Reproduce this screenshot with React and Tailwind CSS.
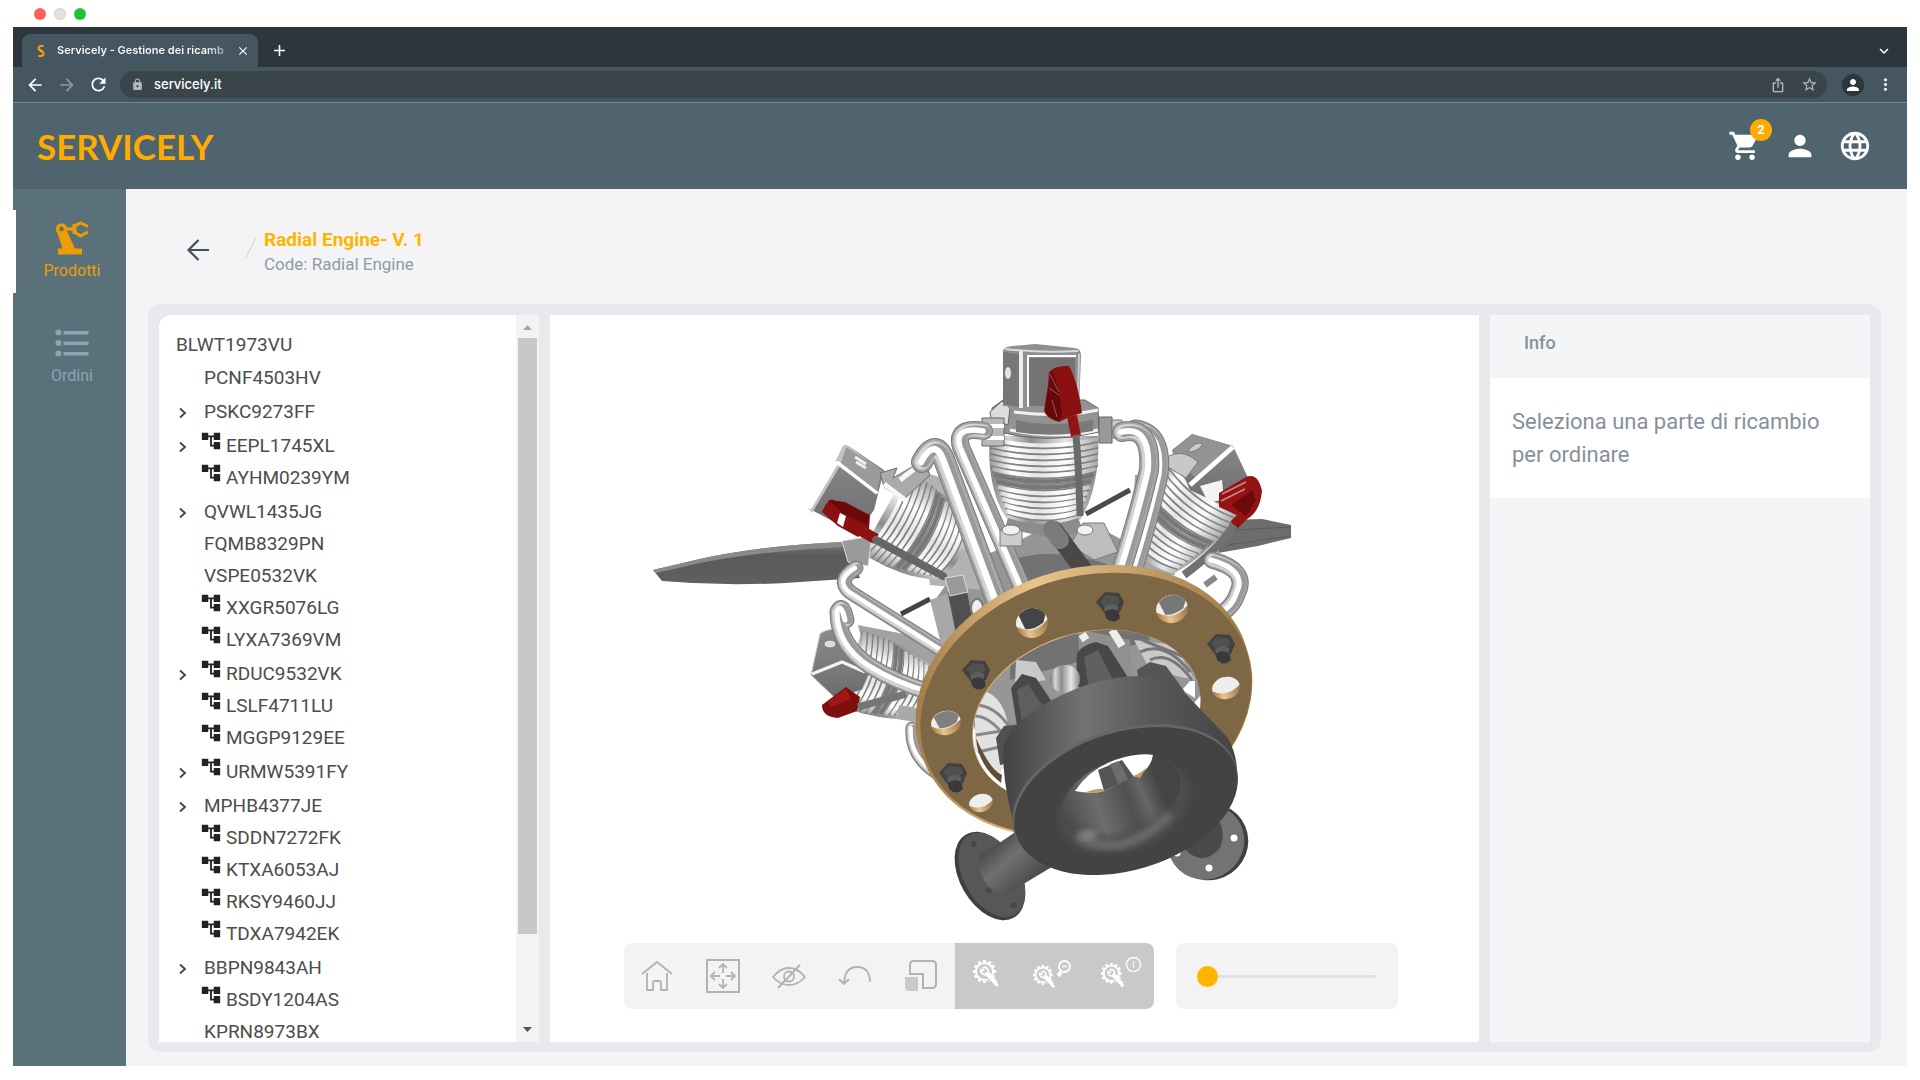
import React, { useState } from "react";
import {
  MdShoppingCart,
  MdPerson,
  MdLanguage,
  MdAccountTree,
  MdIosShare,
  MdStarBorder,
  MdMoreVert,
  MdLock,
  MdRefresh,
  MdClose,
  MdAdd,
  MdArrowBack,
  MdArrowForward,
  MdKeyboardArrowDown,
} from "react-icons/md";

const parts = [
  { name: "PCNF4503HV" },
  { name: "PSKC9273FF", open: true },
  { name: "EEPL1745XL", open: true, group: true },
  { name: "AYHM0239YM", group: true },
  { name: "QVWL1435JG", open: true },
  { name: "FQMB8329PN" },
  { name: "VSPE0532VK" },
  { name: "XXGR5076LG", group: true },
  { name: "LYXA7369VM", group: true },
  { name: "RDUC9532VK", open: true, group: true },
  { name: "LSLF4711LU", group: true },
  { name: "MGGP9129EE", group: true },
  { name: "URMW5391FY", open: true, group: true },
  { name: "MPHB4377JE", open: true },
  { name: "SDDN7272FK", group: true },
  { name: "KTXA6053AJ", group: true },
  { name: "RKSY9460JJ", group: true },
  { name: "TDXA7942EK", group: true },
  { name: "BBPN9843AH", open: true },
  { name: "BSDY1204AS", group: true },
  { name: "KPRN8973BX" },
];

function BrowserChrome() {
  return (
    <div className="shrink-0 font-[Inter,sans-serif] text-white">
      <div className="flex h-10 items-end bg-[#2c363c] pl-[9px] pr-[14px]">
        <div className="flex h-[33px] w-[236px] items-center rounded-t-lg bg-[#455660] pl-[12px] pr-[8px]">
          <svg viewBox="0 0 14 14" className="mr-[9px] size-[14px] shrink-0" fill="none" stroke="#f0a010" strokeWidth="2">
            <path d="M9.5 2H7.3Q4.6 2 4.6 4.4 4.6 5.6 6 6.4L8.4 8.2M4.4 12H6.8Q9.6 12 9.6 9.6 9.6 8.4 8.4 7.6L6 5.6" />
          </svg>
          <span className="min-w-0 flex-1 whitespace-nowrap bg-linear-to-r from-white from-85% to-[#6f7d85] bg-clip-text text-[11px] font-semibold text-transparent">
            Servicely - Gestione dei ricamb
          </span>
          <button aria-label="Chiudi scheda" className="ml-1">
            <MdClose className="size-[14px]" />
          </button>
        </div>
        <button aria-label="Nuova scheda" className="mb-[7px] ml-[12px]">
          <MdAdd className="size-[19px]" />
        </button>
        <button aria-label="Cerca schede" className="mb-[7px] ml-auto">
          <MdKeyboardArrowDown className="size-[18px]" />
        </button>
      </div>
      <div className="flex h-9 items-center border-b border-[#74858e] bg-[#455660] pl-[12px] pr-[12px]">
        <button aria-label="Indietro"><MdArrowBack className="size-5" /></button>
        <button aria-label="Avanti" className="ml-[12px] text-[#8d999f]"><MdArrowForward className="size-5" /></button>
        <button aria-label="Ricarica" className="ml-[11px]"><MdRefresh className="size-[21px]" /></button>
        <div className="ml-[11px] flex h-[27px] flex-1 items-center rounded-full bg-[#39454a] pl-[11px] pr-[9px]">
          <MdLock className="size-[13px] text-[#b4bbbe]" />
          <input
            aria-label="Indirizzo"
            defaultValue="servicely.it"
            className="ml-[10px] min-w-0 flex-1 bg-transparent text-[13px] font-medium outline-none"
          />
          <button aria-label="Condividi" className="text-[#b4bbbe]"><MdIosShare className="size-4" /></button>
          <button aria-label="Preferiti" className="ml-[15px] text-[#b4bbbe]"><MdStarBorder className="size-[17px]" /></button>
        </div>
        <button aria-label="Profilo" className="ml-[15px] flex size-[22px] items-center justify-center rounded-full bg-[#2c363c]">
          <MdPerson className="size-[18px]" />
        </button>
        <button aria-label="Menu" className="ml-[12px]"><MdMoreVert className="size-[19px]" /></button>
      </div>
    </div>
  );
}

function Header() {
  return (
    <header className="flex h-[86px] shrink-0 items-center bg-[#4f646f] pl-[24px] pr-[35px]">
      <a href="#home" className="font-[Lato,sans-serif] text-[35px] leading-none font-bold text-[#ffab00]">SERVICELY</a>
      <div className="ml-auto flex items-center gap-[21px] text-white">
        <button aria-label="Carrello" className="relative">
          <MdShoppingCart className="size-[34px]" />
          <span className="absolute -top-[10px] left-[22px] flex size-[22px] items-center justify-center rounded-full bg-[#ffab00] font-[Roboto,sans-serif] text-[13px] font-bold">
            2
          </span>
        </button>
        <button aria-label="Utente"><MdPerson className="size-[34px]" /></button>
        <button aria-label="Lingua"><MdLanguage className="size-[34px]" /></button>
      </div>
    </header>
  );
}

function RobotIcon() {
  return (
    <svg viewBox="0 0 34 34" className="h-[34px] w-[34px]" fill="none" stroke="currentColor">
      <path d="M3 33.500V27.500H7.500L2 10.500 10.500 7 20 27.500H27V33.500Z" fill="currentColor" stroke="none" />
      <circle cx="6.500" cy="8" r="4" strokeWidth="3.500" fill="#5a717c" />
      <path d="M10 8H19" strokeWidth="3.500" />
      <path d="M33 5.500 25.500 2 19.500 5V11L25.500 15 33 11" strokeWidth="3" />
      <path d="M19.500 3V13" strokeWidth="4" />
    </svg>
  );
}

function ListIcon() {
  return (
    <svg viewBox="0 0 34 34" className="h-[34px] w-[34px]" fill="currentColor">
      {[6.5, 17, 27.500].map((y) => (
        <g key={y}>
          <circle cx="3.500" cy={y} r="3" />
          <rect x="8.500" y={y - 1.500} width="25" height="3.500" />
        </g>
      ))}
    </svg>
  );
}

function Sidebar() {
  return (
    <nav className="flex w-[113px] shrink-0 flex-col gap-[22px] bg-[#5a717c] pt-[21px] font-[Roboto,sans-serif] text-[16px] leading-5">
      <a href="#prodotti" className="flex h-[83px] flex-col items-center gap-[6px] border-l-[3px] border-white pt-[11px] pl-[2px] text-[#ee9d00]">
        <RobotIcon />
        Prodotti
      </a>
      <a href="#ordini" className="flex h-[83px] flex-col items-center gap-[6px] border-l-[3px] border-transparent pt-[11px] pl-[2px] text-[#8ea4b1]">
        <ListIcon />
        Ordini
      </a>
    </nav>
  );
}

function PartsTree() {
  return (
    <section className="flex w-[380px] shrink-0 overflow-hidden rounded-tl-xl bg-white">
      <div className="min-w-0 flex-1 overflow-hidden pt-[14px] pl-[17px] font-[Roboto,sans-serif] text-[19px] leading-8 text-[#4c4c4c]">
        <p className="h-[33px]">BLWT1973VU</p>
        <ul>
          {parts.map((p) => (
            <li key={p.name} className={p.open ? "flex h-[34px] items-center pt-[2px]" : "flex h-8 items-center"}>
              <span className="w-[28px] shrink-0">
                {p.open && (
                  <button aria-label={"Espandi " + p.name} className="block pt-px pl-px">
                    <svg viewBox="0 0 12 12" className="size-3" fill="none" stroke="currentColor" strokeWidth="2">
                      <path d="M3 1.500 8 6 3 10.500" />
                    </svg>
                  </button>
                )}
              </span>
              {p.group && <MdAccountTree className="mr-1 -ml-1 mb-[10px] size-[22px] text-[#222]" />}
              <span>{p.name}</span>
            </li>
          ))}
        </ul>
      </div>
      <div className="flex w-[23px] shrink-0 flex-col items-center bg-[#f3f3f3]">
        <svg viewBox="0 0 23 23" className="size-[23px] shrink-0"><path d="M7 15 11.500 10 16 15Z" fill="#a8a8a8" /></svg>
        <div className="flex w-[19px] flex-1 flex-col"><div className="h-7/8 bg-[#c8c8c8]" /></div>
        <svg viewBox="0 0 23 23" className="size-[23px] shrink-0"><path d="M7 8 11.500 13 16 8Z" fill="#555" /></svg>
      </div>
    </section>
  );
}

function Pipe({ d, w }) {
  return (
    <g fill="none" strokeLinecap="round">
      <path d={d} stroke="#787878" strokeWidth={w} />
      <path d={d} stroke="#a3a3a3" strokeWidth={w - 2} />
      <path d={d} stroke="#d4d4d4" strokeWidth={w * 0.7} />
      <path d={d} stroke="#9a9a9a" strokeWidth={w * 0.5} transform="translate(2 0)" />
      <path d={d} stroke="#ffffff" strokeWidth={w * 0.3} transform="translate(-1 0)" />
    </g>
  );
}

/* A finned barrel along the vertical axis, centred on x = 0, starting at y = 0. */
function Barrel() {
  const rows = Array.from({ length: 13 }, (_, i) => i);
  return (
    <g>
      <path d="M-54 0H54C56 34 48 66 36 84 12 92-14 92-36 84-50 66-57 34-54 0Z" fill="url(#steel)" />
      {rows.map((i) => {
        const half = 54 - Math.max(0, i - 4) * 2.1;
        const y = 3 + i * 6;
        return (
          <g key={i} fill="none">
            <path d={`M${-half} ${y}Q0 ${y + 13} ${half} ${y}`} stroke={i === 6 || i === 7 ? "#777" : "url(#fin)"} strokeWidth="4" />
            <path d={`M${-half} ${y + 3}Q0 ${y + 16} ${half} ${y + 3}`} stroke="#808080" strokeWidth="1.300" />
          </g>
        );
      })}
    </g>
  );
}

function Nut({ x, y }) {
  return (
    <g transform={`translate(${x} ${y})`}>
      <path d="M-14-4-5-14 9-13 14-4 10 6-4 9Z" fill="#414141" />
      <path d="M-10-5-4-11 7-10 10-4 4 2-5 2Z" fill="#505050" />
      <path d="M-6 2 7 0 10 12Q3 19-4 12Z" fill="#393939" />
      <path d="M-6 2Q0-5 8 0L8 5Q1 1-5 6Z" fill="#5e5e5e" />
    </g>
  );
}

function Hole({ x, y, rx, ry, dark }) {
  return (
    <g transform={`translate(${x} ${y}) rotate(-14)`}>
      <ellipse rx={rx} ry={ry} fill="url(#goldEdge)" />
      <path d={`M${-rx} 0A${rx} ${ry} 0 0 1 ${rx} 0Q0 ${ry * 0.9} ${-rx} 0Z`} fill="#eee" />
      {dark && (
        <path
          d={`M${-rx * 0.7} ${-ry * 0.7}A${rx} ${ry} 0 0 1 ${rx * 0.94} ${-ry * 0.34}L${rx * 0.7} ${ry * 0.15}Q0 ${ry * 0.5} ${-rx * 0.5} ${ry * 0.28}Z`}
          fill={dark}
        />
      )}
    </g>
  );
}

function Engine() {
  return (
    <svg viewBox="550 315 929 628" className="min-h-0 w-full flex-1" role="img" aria-label="Radial Engine">
      <defs>
        <linearGradient id="steel" x1="0" x2="1">
          <stop offset="0" stopColor="#777" />
          <stop offset=".18" stopColor="#d6d6d6" />
          <stop offset=".38" stopColor="#8c8c8c" />
          <stop offset=".7" stopColor="#e6e6e6" />
          <stop offset="1" stopColor="#888" />
        </linearGradient>
        <linearGradient id="fin" gradientUnits="userSpaceOnUse" x1="-54" x2="54" y1="0" y2="0">
          <stop offset="0" stopColor="#9a9a9a" />
          <stop offset=".2" stopColor="#fff" />
          <stop offset=".45" stopColor="#e4e4e4" />
          <stop offset=".7" stopColor="#fff" />
          <stop offset="1" stopColor="#a8a8a8" />
        </linearGradient>
        <linearGradient id="face" x1="0" x2="0" y1="0" y2="1">
          <stop offset="0" stopColor="#8c8c8c" />
          <stop offset="1" stopColor="#6c6c6c" />
        </linearGradient>
        <linearGradient id="goldEdge" x1="0" x2="1">
          <stop offset="0" stopColor="#a37d48" />
          <stop offset=".35" stopColor="#e9c48c" />
          <stop offset="1" stopColor="#9c7743" />
        </linearGradient>
        <linearGradient id="bell" x1="0" x2="1">
          <stop offset="0" stopColor="#434343" />
          <stop offset=".35" stopColor="#737373" />
          <stop offset=".65" stopColor="#575757" />
          <stop offset="1" stopColor="#444" />
        </linearGradient>
        <linearGradient id="bore" x1="0" x2="1">
          <stop offset="0" stopColor="#4a4a4a" />
          <stop offset=".3" stopColor="#6d6d6d" />
          <stop offset=".55" stopColor="#505050" />
          <stop offset=".68" stopColor="#666" />
          <stop offset=".82" stopColor="#444" />
          <stop offset="1" stopColor="#444" />
        </linearGradient>
        <linearGradient id="blade" x1="0" x2="0" y1="0" y2="1">
          <stop offset="0" stopColor="#7c7c7c" />
          <stop offset=".3" stopColor="#5a5a5a" />
          <stop offset="1" stopColor="#606060" />
        </linearGradient>
        <linearGradient id="exhaust" x1="0" y1="0" x2="1" y2="1">
          <stop offset=".2" stopColor="#444" />
          <stop offset=".45" stopColor="#707070" />
          <stop offset=".8" stopColor="#444" />
        </linearGradient>
        <filter id="soft" x="-20%" y="-20%" width="140%" height="140%">
          <feGaussianBlur stdDeviation="3.500" />
        </filter>
      </defs>

      {/* propeller blades */}
      <path d="M653 570 700 559Q765 545 845 542L860 578 800 582Q730 587 662 581Z" fill="url(#blade)" />
      <path d="M653 570 700 559Q765 545 845 542V547Q760 551 700 563L656 573Z" fill="#8a8a8a" />
      <path d="M1225 520 1262 519 1291 525V538L1258 546 1218 553Z" fill="#6d6d6d" />
      <path d="M1235 530 1291 527M1228 545 1290 536" stroke="#5c5c5c" fill="none" />

      {/* crankcase behind the ring */}
      <path d="M935 600 960 565 1010 545 1040 530 1100 528 1160 560 1190 600 1205 690 1180 720 1000 730 985 760 965 700Z" fill="#969696" />
      <path d="M1012 560Q1055 545 1112 566L1150 640 1085 660 1010 680Z" fill="#727272" />
      <path d="M975 690Q1010 690 1010 750L1000 775 975 750Z" fill="#e2e2e2" />
      <path d="M975 705Q995 705 1010 728M975 716Q990 716 1008 740M976 735 1008 730M978 752 1008 745" stroke="#888" strokeWidth="3" fill="none" />

      {/* lower left cylinder */}
      <path d="M858 625 935 640 940 710 880 712Z" fill="#a2a2a2" />
      <g transform="translate(850 668) rotate(-72)"><g transform="scale(.72 .95)"><Barrel /></g></g>
      <path d="M820 634Q822 631 833 629L845 650 872 668 862 690 835 698 811 675Z" fill="url(#face)" stroke="#c9c9c9" />
      <path d="M812 674 842 662 865 672" stroke="#f4f4f4" strokeWidth="3" fill="none" />
      <ellipse cx="830" cy="644" rx="6" ry="4" fill="#ddd" stroke="#777" />
      <path d="M822 705 846 687 860 697 857 711 838 718Q822 717 822 705Z" fill="#7d0f0f" />
      <path d="M827 702 846 689 851 699 832 707Z" fill="#a31616" />
      <path d="M858 707 906 694" stroke="#757575" strokeWidth="7" fill="none" />
      <path d="M898 712 922 716" stroke="#a9a9a9" strokeWidth="14" />
      <Pipe d="M912 728Q910 755 935 772" w={13} />

      {/* upper left cylinder */}
      <path d="M915 470 950 480 985 590 930 585Z" fill="#b2b2b2" />
      <g transform="translate(884 512) rotate(-61)"><g transform="scale(.86 .98)"><Barrel /></g></g>
      <path d="M843 446Q846 444 850 447L884 470 874 510 857 534 808 508 835 463Z" fill="url(#face)" />
      <path d="M843 446 835 463 808 508 812 513 840 466 876 493 881 470 848 446Z" fill="#c4c4c4" />
      <path d="M836 463 810 507M838 463 876 492" stroke="#fff" strokeWidth="4" fill="none" strokeLinecap="round" />
      <path d="M846 447 882 470 877 491 841 463Z" fill="#9a9a9a" />
      <path d="M855 457 866 464M856 462 866 468" stroke="#eee" strokeWidth="3" />
      <path d="M880 473 897 468 893 478 924 460 930 475 903 500 884 487Z" fill="#aaa" stroke="#6c6c6c" />
      <path d="M884 484 905 500M900 480 918 466" stroke="#f7f7f7" strokeWidth="5" />
      <path d="M842 541 872 536 868 566 848 562Z" fill="#9b9b9b" stroke="#ddd" />
      <path d="M822 512Q828 497 834 500L870 515 869 529 858 537 838 526Z" fill="#8d1010" />
      <path d="M828 500 845 502 869 515 868 525 845 515Z" fill="#6b0909" />
      <path d="M840 513 846 516 843 527 837 523Z" fill="#fff" />
      <path d="M858 529 876 539" stroke="#8f1212" strokeWidth="11" />
      <path d="M876 540 943 576" stroke="#666" strokeWidth="8" strokeLinecap="round" />

      {/* upper right cylinder */}
      <path d="M1135 475 1165 470 1175 575 1130 575Z" fill="#a6a6a6" />
      <g transform="translate(1204 486) rotate(38)"><g transform="scale(.82 1.05)"><Barrel /></g></g>
      <path d="M1192 434 1233 446 1250 482 1222 505 1190 490 1172 450Z" fill="url(#face)" />
      <path d="M1192 434 1233 446 1195 478 1172 452Z" fill="#939393" />
      <path d="M1233 447 1190 485" stroke="#fff" strokeWidth="5" />
      <path d="M1187 452Q1196 440 1203 444 1197 453 1187 452Z" fill="#c9c9c9" stroke="#777" />
      <path d="M1160 462Q1180 445 1198 462L1186 478Z" fill="#c8c8c8" stroke="#777" />
      <path d="M1200 486 1222 480 1224 500 1208 502Z" fill="#f4f4f4" />
      <path d="M1219 493 1246 477Q1258 472 1262 491 1260 512 1247 519L1238 516 1228 511 1219 507Z" fill="#941313" />
      <path d="M1222 494 1246 482M1221 501 1245 489" stroke="#c88" strokeWidth="1.500" />
      <path d="M1232 505 1252 490 1256 500 1245 518Z" fill="#6d0a0a" />
      <path d="M1244 515 1234 525" stroke="#941313" strokeWidth="10" />
      <path d="M1234 525Q1218 550 1184 575" stroke="#717171" strokeWidth="8" fill="none" />
      <path d="M1086 514 1130 490" stroke="#4a4a4a" strokeWidth="5" />
      <path d="M901 614 930 599" stroke="#454545" strokeWidth="5" />

      {/* right lower pipes */}
      <Pipe d="M1212 560Q1248 570 1238 592 1233 608 1218 615" w={17} />
      <path d="M1205 585 1216 577" stroke="#888" strokeWidth="6" />

      {/* top cylinder */}
      <g transform="translate(1044 436)"><Barrel /></g>
      <path d="M1008 518Q1044 530 1078 518L1084 532 1050 538 1005 528Z" fill="#8c8c8c" />
      <path d="M992 408 1003 400 1085 400 1098 408 1099 432Q1045 446 992 430Z" fill="#939393" stroke="#666" />
      <path d="M990 412 1002 401 1010 408 1008 425 991 419Z" fill="#dcdcdc" stroke="#666" />
      <path d="M1014 412Q1060 418 1098 410M1010 430Q1060 440 1098 430" stroke="#f1f1f1" strokeWidth="3" fill="none" />
      <path d="M1016 420Q1050 428 1093 420V431Q1050 438 1016 432Z" fill="#7a7a7a" />
      <path d="M1003 351Q1003 347 1012 346L1035 344 1075 348Q1081 349 1081 355L1079 410 1003 406Z" fill="#8f8f8f" />
      <path d="M1003 352 1019 354 1020 407 1003 404Z" fill="#777" />
      <path d="M1021 350V408" stroke="#eee" strokeWidth="4" />
      <path d="M1079 354 1078 402" stroke="#ccc" strokeWidth="2" />
      <path d="M1005 349Q1040 353 1078 351" stroke="#d9d9d9" strokeWidth="2" fill="none" />
      <path d="M1028 358H1075V406H1028Z" fill="#747474" />
      <path d="M1028 407V356H1076" stroke="#fff" strokeWidth="2" fill="none" />
      <ellipse cx="1008" cy="373" rx="3" ry="6" fill="#e3e3e3" />
      <path d="M1049 372Q1055 365 1069 366 1078 382 1082 413L1069 417 1059 422Q1045 418 1044 410L1048 385Z" fill="#8b1010" />
      <path d="M1051 371Q1058 377 1062 415L1058 421Q1047 417 1045 410L1049 384Z" fill="#650909" />
      <path d="M1050 374 1059 392M1049 388 1059 395M1052 400 1057 417" stroke="#a55" strokeWidth="1" />
      <path d="M1072 416 1076 436" stroke="#941313" strokeWidth="10" />
      <path d="M1076 435Q1079 470 1080 516" stroke="#6a6a6a" strokeWidth="7" fill="none" />
      <path d="M982 418H1004V446H982Z" fill="#b9b9b9" stroke="#666" />
      <path d="M982 426H1004M982 438H1004" stroke="#fff" strokeWidth="4" />
      <path d="M1099 417H1112V443H1099Z" fill="#999" stroke="#666" />
      <path d="M1112 420H1122V438H1112Z" fill="#ccc" stroke="#777" />

      {/* push-rod and intake pipes */}
      <Pipe d="M984 431Q955 426 961 447L1024 592" w={18} />
      <Pipe d="M922 462Q936 436 945 462L1003 618" w={22} />
      <Pipe d="M1135 428Q1165 432 1160 475 1150 520 1133 574" w={17} />
      <Pipe d="M1122 432Q1152 425 1149 470 1140 510 1120 574" w={20} />
      <Pipe d="M856 568Q836 580 850 592L950 655" w={15} />
      <Pipe d="M846 620Q842 602 838 612 838 645 870 666 895 682 930 692" w={17} />
      <path d="M930 600 958 590 965 650 945 660Z" fill="#a8a8a8" />
      <path d="M957 590 966 636" stroke="#505050" strokeWidth="19" />
      <path d="M945 578 963 575 968 592 950 596Z" fill="#999" stroke="#ddd" />
      <ellipse cx="977" cy="608" rx="6" ry="9" fill="#eee" stroke="#777" strokeWidth="2" />

      {/* hub details above the ring */}
      <path d="M1083 523H1104L1118 552 1094 560 1070 545Z" fill="#bdbdbd" stroke="#777" />
      <path d="M1000 530H1022V546H1000Z" fill="#ccc" stroke="#777" />
      <ellipse cx="1085" cy="530" rx="8" ry="5" fill="#f2f2f2" stroke="#777" />
      <ellipse cx="1011" cy="530" rx="9" ry="5" fill="#f2f2f2" stroke="#777" />
      <path d="M1054 530 1085 572" stroke="#484848" strokeWidth="18" strokeLinecap="round" />
      <path d="M1052 529 1060 540" stroke="#7b7b7b" strokeWidth="18" strokeLinecap="round" />

      {/* cones that carry the bell */}
      <path d="M1078 632H1092L1130 640 1132 680 1080 670Z" fill="#909090" />
      <path d="M1082 634 1086 640M1112 630 1122 646" stroke="#eee" strokeWidth="8" />
      <path d="M1134 640 1175 645 1195 680 1150 670Z" fill="#c9c9c9" />
      <path d="M1140 652Q1165 640 1190 672M1150 660Q1170 650 1192 680M1142 640 1192 660" stroke="#777" strokeWidth="3" fill="none" />
      <path d="M1016 660 1036 662 1046 680 1015 685Z" fill="#c9c9c9" />
      <path d="M1190 681 1195 681V698L1182 690Z" fill="#fff" />
      <path d="M1077 653Q1084 644 1096 642L1108 646 1132 684 1096 704 1076 684Z" fill="#484848" />
      <path d="M1084 657 1098 650 1114 682 1090 696Z" fill="#606060" />
      <path d="M1011 688 1022 674 1036 678 1054 705 1018 732Z" fill="#484848" />
      <path d="M1017 690 1028 684 1044 708 1022 724Z" fill="#5e5e5e" />
      <path d="M996 738 1004 726 1022 724 1020 760 1000 765Z" fill="#505050" />
      <path d="M1137 670 1150 662 1166 666 1185 692 1140 690Z" fill="#555" />
      <ellipse cx="1065" cy="679" rx="15" ry="14" fill="url(#steel)" />

      {/* gold ring */}
      <g transform="translate(-1 1)">
        <path
          fillRule="evenodd"
          d="M922.400 752.800A171 129-18 1 1 1247.600 647.200A171 129-18 1 1 922.400 752.800ZM977 753A117 84-18 1 0 1199.500 680.500A117 84-18 1 0 977 753Z"
          fill="url(#goldEdge)"
        />
        <path
          fillRule="evenodd"
          d="M926 755A168 126-18 1 1 1247.600 651A168 126-18 1 1 926 755ZM976 752.500A117 84-18 1 0 1198.500 680A117 84-18 1 0 976 752.500Z"
          fill="#7d6745"
        />
      </g>
      <path d="M1001 783Q978 765 976 738 990 770 1002 775Z" fill="#5f4e35" />
      <Hole x={1032} y={623} rx={16} ry={15} dark="#444" />
      <Hole x={1172} y={609} rx={16} ry={14} dark="#777" />
      <Hole x={1226} y={688} rx={14} ry={11} />
      <Hole x={946} y={723} rx={15} ry={12} dark="#808080" />
      <Hole x={981} y={803} rx={12} ry={9} />
      <Nut x={1110} y={606} />
      <Nut x={1221} y={648} />
      <Nut x={976} y={674} />
      <Nut x={953} y={777} />

      {/* exhaust stubs */}
      <g transform="translate(990 876) rotate(-30)">
        <ellipse rx="30" ry="48" fill="#3f3f3f" />
        <ellipse cx="2" rx="28" ry="46" fill="#575757" />
        <circle cx="2" cy="-36" r="3" fill="#474747" />
        <circle cx="-8" cy="12" r="3" fill="#474747" />
        <circle cx="6" cy="37" r="3" fill="#474747" />
      </g>
      <path d="M980 856 1030 822 1060 862 1010 892Q994 898 984 880 976 866 980 856Z" fill="url(#exhaust)" />
      <g transform="translate(1206 842) rotate(-35)">
        <ellipse cx="3" cy="2" rx="39" ry="38" fill="#404040" />
        <ellipse rx="39" ry="37" fill="#737373" />
      </g>
      <circle cx="1234" cy="838" r="3.500" fill="#fff" />
      <circle cx="1209" cy="868" r="3.500" fill="#fff" />
      <circle cx="1177" cy="853" r="3.500" fill="#fff" />
      <path d="M1170 830 1212 812Q1228 828 1220 848 1204 866 1188 852Z" fill="#494949" />

      {/* bell */}
      <path d="M1003 752Q1006 722 1060 696 1100 676 1142 676 1170 676 1182 690L1228 738Q1240 760 1236 785L1120 860 1018 838Q1003 790 1003 752Z" fill="url(#bell)" />
      <ellipse cx="1125" cy="799" rx="116" ry="70" transform="rotate(-17 1125 799)" fill="#666" />
      <ellipse cx="1126" cy="801" rx="115" ry="69" transform="rotate(-17 1126 801)" fill="#434343" />
      <ellipse cx="1124" cy="806" rx="68" ry="44" transform="rotate(-19 1124 806)" fill="#4e4e4e" filter="url(#soft)" />
      <ellipse cx="1121" cy="798" rx="62" ry="38" transform="rotate(-22 1121 798)" fill="url(#bore)" />
      <path d="M1067 818Q1078 842 1108 840 1146 836 1176 806" stroke="#484848" strokeWidth="7" fill="none" filter="url(#soft)" />
      <path d="M1075 791Q1092 765 1125 757 1142 753 1153 755 1150 772 1133 777L1104 791Q1090 794 1075 791Z" fill="#fff" />
      <path d="M1086 792Q1104 786 1104 791L1097 793ZM1133 776Q1144 772 1148 765L1140 778Z" fill="#c79e62" />
      <path d="M1098 770 1122 760 1134 777 1104 791Z" fill="#555" />
      <path d="M1110 764 1119 761 1128 779 1118 784Z" fill="#6d6d6d" />
      <path d="M1078 836Q1092 848 1122 844 1150 836 1170 814" stroke="#757575" strokeWidth="7" fill="none" filter="url(#soft)" />
      <ellipse cx="1088" cy="835" rx="9" ry="5" fill="#868686" filter="url(#soft)" />
    </svg>
  );
}

/* Gear with a wrench, in a 28-unit box. */
function GearWrench() {
  const teeth = Array.from({ length: 12 }, (_, i) => i * 30);
  return (
    <g fill="none" stroke="#fff">
      <circle cx="11.500" cy="11.500" r="8.500" strokeWidth="2" />
      {teeth.map((a) => (
        <path key={a} d="M11.500 3V0" strokeWidth="3" transform={`rotate(${a} 11.500 11.500)`} />
      ))}
      <path d="M12 12 23 24" stroke="#c9c9c9" strokeWidth="6" />
      <path d="M8 8.500Q7 13 11 14.500L13 14.500 23 25M10.500 7Q15.500 7.500 15 12L24 22.500" strokeWidth="1.800" />
      <path d="M13.500 13.500 24 25" strokeWidth="3" strokeLinecap="round" />
      <path d="M10.500 7V10.500L8 11" strokeWidth="1.500" />
    </g>
  );
}

const tools = [
  {
    label: "Home",
    icon: <path d="M17 18 32 6 47 18M22 17V34H28V27Q28 25 30 25H34Q36 25 36 27V34H42V17" />,
  },
  {
    label: "Adatta",
    icon: (
      <>
        <path d="M16 4H48V36H16Z" strokeWidth="2" />
        <path d="M32 17V8M28 12 32 8 36 12M32 23V32M28 28 32 32 36 28M29 20H20M24 16 20 20 24 24M35 20H44M40 16 44 20 40 24" />
      </>
    ),
  },
  {
    label: "Nascondi",
    icon: (
      <>
        <path d="M16 21Q23 12 32 12 41 12 48 21 41 29 32 29 23 29 16 21Z" />
        <circle cx="32" cy="20.500" r="5" />
        <path d="M21 32 43 9" strokeWidth="2" />
      </>
    ),
  },
  {
    label: "Annulla",
    icon: <path d="M47 26Q47 11 34 11 22 11 21 27M16 23 21 28 26 23" />,
  },
  {
    label: "Esplodi",
    icon: (
      <>
        <path d="M21 18V9Q21 5 25 5H43Q47 5 47 9V28Q47 32 43 32H34V18Z" strokeWidth="2" />
        <path d="M16 21H29V35H20Q16 35 16 31Z" fill="#c9c9c9" stroke="none" />
      </>
    ),
  },
];

function Toolbar() {
  return (
    <div role="toolbar" aria-label="Strumenti" className="flex h-[66px] w-[530px] overflow-hidden rounded-lg bg-[#f3f3f3]">
      {tools.map((t) => (
        <button key={t.label} aria-label={t.label} className="flex flex-1 items-center justify-center first:bg-[#f4f4f6]">
          <svg viewBox="0 0 64 40" className="h-10 w-16" fill="none" stroke="#b2b2b2" strokeWidth="1.800">
            {t.icon}
          </svg>
        </button>
      ))}
      <div className="flex w-[199px] bg-[#c9c9c9]">
        <button aria-label="Ricambio" className="flex flex-1 items-center justify-center pb-1">
          <svg viewBox="0 0 28 28" className="size-7"><GearWrench /></svg>
        </button>
        <button aria-label="Cerca ricambio" className="flex flex-1 items-center justify-center pr-1 pb-1">
          <svg viewBox="0 0 40 32" className="h-8 w-10">
            <g transform="translate(1 7) scale(.86)"><GearWrench /></g>
            <circle cx="32.500" cy="8.500" r="5.500" fill="none" stroke="#fff" strokeWidth="1.800" />
            <path d="M30 8.500H35" stroke="#fff" strokeWidth="1.500" />
            <path d="M29 14 26 18" stroke="#fff" strokeWidth="4" />
          </svg>
        </button>
        <button aria-label="Info ricambio" className="flex flex-1 items-center justify-center pb-1">
          <svg viewBox="0 0 42 36" className="h-9 w-[42px]">
            <g transform="translate(1 7) scale(.9)"><GearWrench /></g>
            <circle cx="33.500" cy="8.500" r="7" fill="none" stroke="#fff" strokeWidth="1.400" />
            <path d="M34 5Q32.500 8.500 34 12" fill="none" stroke="#fff" />
          </svg>
        </button>
      </div>
    </div>
  );
}

function Viewer() {
  const [value, setValue] = useState(0);
  return (
    <section className="flex min-w-0 flex-1 flex-col bg-white pb-[33px]">
      <Engine />
      <div className="flex shrink-0 justify-center gap-[22px] pr-2">
        <Toolbar />
        <div className="flex h-[66px] w-[222px] items-center justify-center rounded-lg bg-[#f3f3f3]">
          <input
            type="range"
            aria-label="Esplosione"
            min="0"
            max="100"
            value={value}
            onChange={(e) => setValue(Number(e.target.value))}
            className="h-[3px] w-[179px] appearance-none rounded-full bg-[#dae2e2] [&::-webkit-slider-thumb]:size-[21px] [&::-webkit-slider-thumb]:appearance-none [&::-webkit-slider-thumb]:rounded-full [&::-webkit-slider-thumb]:bg-[#ffb400]"
          />
        </div>
      </div>
    </section>
  );
}

function InfoPanel() {
  return (
    <aside className="w-[380px] shrink-0 bg-[#f4f5f7] font-[Roboto,sans-serif] text-[#87909a]">
      <h2 className="h-[63px] pt-[16px] pl-[34px] text-[18px] leading-6 font-medium">Info</h2>
      <p className="bg-white px-[22px] py-[27px] text-[22px] leading-[33px]">Seleziona una parte di ricambio per ordinare</p>
    </aside>
  );
}

export default function App() {
  return (
    <div className="flex h-screen flex-col bg-white px-[13px] pb-[14px]">
      <div className="flex h-[27px] shrink-0 items-center gap-2 pl-[21px]">
        <span className="size-3 rounded-full bg-[#ff5f57]" />
        <span className="size-3 rounded-full border border-[#d0d0d0] bg-[#e2e2e2]" />
        <span className="size-3 rounded-full bg-[#1fc436]" />
      </div>
      <BrowserChrome />
      <Header />
      <div className="flex min-h-0 flex-1">
        <Sidebar />
        <main className="flex min-w-0 flex-1 flex-col bg-[#f4f4f6] pr-[26px] pb-[14px] pl-[22px]">
          <div className="flex h-[115px] shrink-0 items-center pl-[36px] font-[Roboto,sans-serif]">
            <button aria-label="Indietro" className="text-[#3f525d]">
              <svg viewBox="0 0 28 28" className="size-7" fill="none" stroke="currentColor" strokeWidth="2.200">
                <path d="M25 17H5M14.500 7 4.500 17 14.500 27" />
              </svg>
            </button>
            <svg viewBox="0 0 14 24" className="ml-[32px] h-6 w-[14px]" stroke="#d9dde1" strokeWidth="1.500">
              <path d="M1.500 23.500 12.500 2" />
            </svg>
            <div className="ml-[6px] pt-[10px]">
              <h1 className="text-[19px] leading-6 font-bold text-[#ffb400]">Radial Engine- V. 1</h1>
              <p className="text-[17px] leading-6 text-[#8b9ba7]">Code: Radial Engine</p>
            </div>
          </div>
          <div className="flex min-h-0 flex-1 gap-[11px] rounded-xl bg-[#e8e9ed] p-[11px] pb-[10px]">
            <PartsTree />
            <Viewer />
            <InfoPanel />
          </div>
        </main>
      </div>
    </div>
  );
}
